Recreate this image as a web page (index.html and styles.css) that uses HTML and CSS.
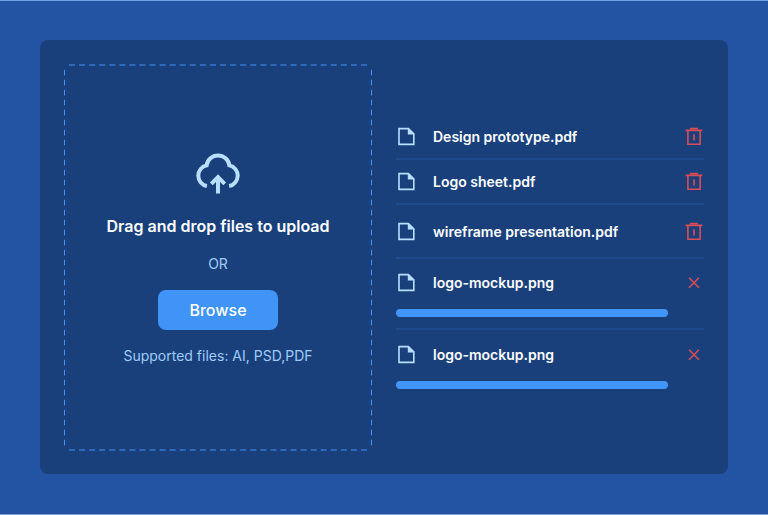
FILE: index.html
```html
<!DOCTYPE html>
<html lang="en">
<head>
<meta charset="utf-8">
<title>File upload</title>
<link rel="stylesheet" href="styles.css">
</head>
<body>
<svg class="sprite" aria-hidden="true">
  <symbol id="file" viewBox="0 0 20 20"><path d="M3 1.6H12.4L17.8 6.9V17.4H3Z" fill="none" stroke="currentColor" stroke-width="1.6"/><path d="M11.8 .8L18.6 7.4H11.8Z" fill="currentColor"/></symbol>
  <symbol id="trash" viewBox="0 0 20 20"><path d="M3.9 3.4V17.2H16.1V3.4M1.7 3.4H18.3M6 1.5H14M10 7.3V13.6" fill="none" stroke="currentColor" stroke-width="1.6"/></symbol>
  <symbol id="close" viewBox="0 0 20 20"><path d="M5 4.7L15 14.7M15 4.7L5 14.7" fill="none" stroke="currentColor" stroke-width="1.5"/></symbol>
</svg>
<main class="panel">
  <section class="dropzone">
    <svg class="outline" aria-hidden="true"><path class="across" d="M5 1H303M5 386H303"/><path class="down" d="M.5 5.8V382M307.5 5.8V382"/></svg>
    <svg class="cloud" viewBox="0 0 48 48"><path d="M12.9 38A10.5 10.5 0 0 1 12.6 17.4A11.5 11.5 0 0 1 35.4 17.4A10.5 10.5 0 0 1 35.1 38"/><path d="M24 45.4V30.5M17.3 35.8L24 29.1L30.7 35.8"/></svg>
    <h1>Drag and drop files to upload</h1>
    <p class="or">OR</p>
    <button class="browse">Browse</button>
    <p class="supported">Supported files: AI, PSD,PDF</p>
  </section>
  <ul class="files">
    <li class="file first"><div class="row"><svg class="doc"><use href="#file"/></svg><span>Design prototype.pdf</span><svg class="action"><use href="#trash"/></svg></div></li>
    <li class="file"><div class="row"><svg class="doc"><use href="#file"/></svg><span>Logo sheet.pdf</span><svg class="action"><use href="#trash"/></svg></div></li>
    <li class="file roomy"><div class="row"><svg class="doc"><use href="#file"/></svg><span>wireframe presentation.pdf</span><svg class="action"><use href="#trash"/></svg></div></li>
    <li class="file loading"><div class="row"><svg class="doc"><use href="#file"/></svg><span>logo-mockup.png</span><svg class="action"><use href="#close"/></svg></div><div class="progress"></div></li>
    <li class="file loading last"><div class="row"><svg class="doc"><use href="#file"/></svg><span>logo-mockup.png</span><svg class="action"><use href="#close"/></svg></div><div class="progress"></div></li>
  </ul>
</main>
</body>
</html>
```
FILE: styles.css
```css
* { box-sizing: border-box; margin: 0; padding: 0; }
body {
  height: 515px;
  padding: 39px 40px 0;
  background: #2354a4;
  border-top: 1px solid #6fa0e6;
  border-bottom: 1px solid #7fa0d6;
  font-family: Inter, sans-serif;
  overflow: hidden;
}
.sprite { display: none; }
.panel {
  display: flex;
  gap: 24px;
  height: 434px;
  padding: 24px;
  border-radius: 8px;
  background: #1a407c;
}
.dropzone {
  position: relative;
  display: flex;
  flex-direction: column;
  align-items: center;
  width: 308px;
  height: 387px;
  padding-top: 84px;
}
.outline { position: absolute; inset: 0; width: 308px; height: 387px; fill: none; stroke: #4094f8; stroke-width: 1; }
.across { stroke-dasharray: 6 4.07; }
.down { stroke-dasharray: 5.6 4.4; }
.cloud { width: 48px; height: 48px; fill: none; stroke: #b8dfff; stroke-width: 4; }
h1 { margin-top: 19px; font-size: 16px; line-height: 22px; font-weight: 600; color: #fff; white-space: nowrap; }
.or { margin-top: 17px; font-size: 14px; line-height: 20px; color: #9fcbfa; }
.browse {
  width: 120px;
  height: 40px;
  margin-top: 16px;
  border: 0;
  border-radius: 8px;
  background: #4094f8;
  font: 500 16px/24px Inter, sans-serif;
  color: #fff;
}
.supported { margin-top: 16px; font-size: 14px; line-height: 20px; color: #9fcbfa; }
.files { flex: 1; padding-top: 50px; list-style: none; }
.file { height: 45px; padding-top: 12px; border-bottom: 2px solid #1e4a8e; }
.file.first { height: 46px; padding-top: 13px; }
.roomy { height: 54px; padding-top: 17px; }
.loading { height: 71px; padding-top: 14px; }
.last { padding-top: 15px; border-bottom: 0; }
.row { display: flex; align-items: center; height: 20px; color: #fff; font-size: 14px; line-height: 20px; font-weight: 600; }
.doc { width: 20px; height: 20px; margin-right: 17px; color: #b8dfff; }
.action { width: 20px; height: 20px; margin-left: auto; color: #dc4c56; }
.progress { width: 272px; height: 8px; margin-top: 16px; border-radius: 4px; background: #4094f8; }
```
